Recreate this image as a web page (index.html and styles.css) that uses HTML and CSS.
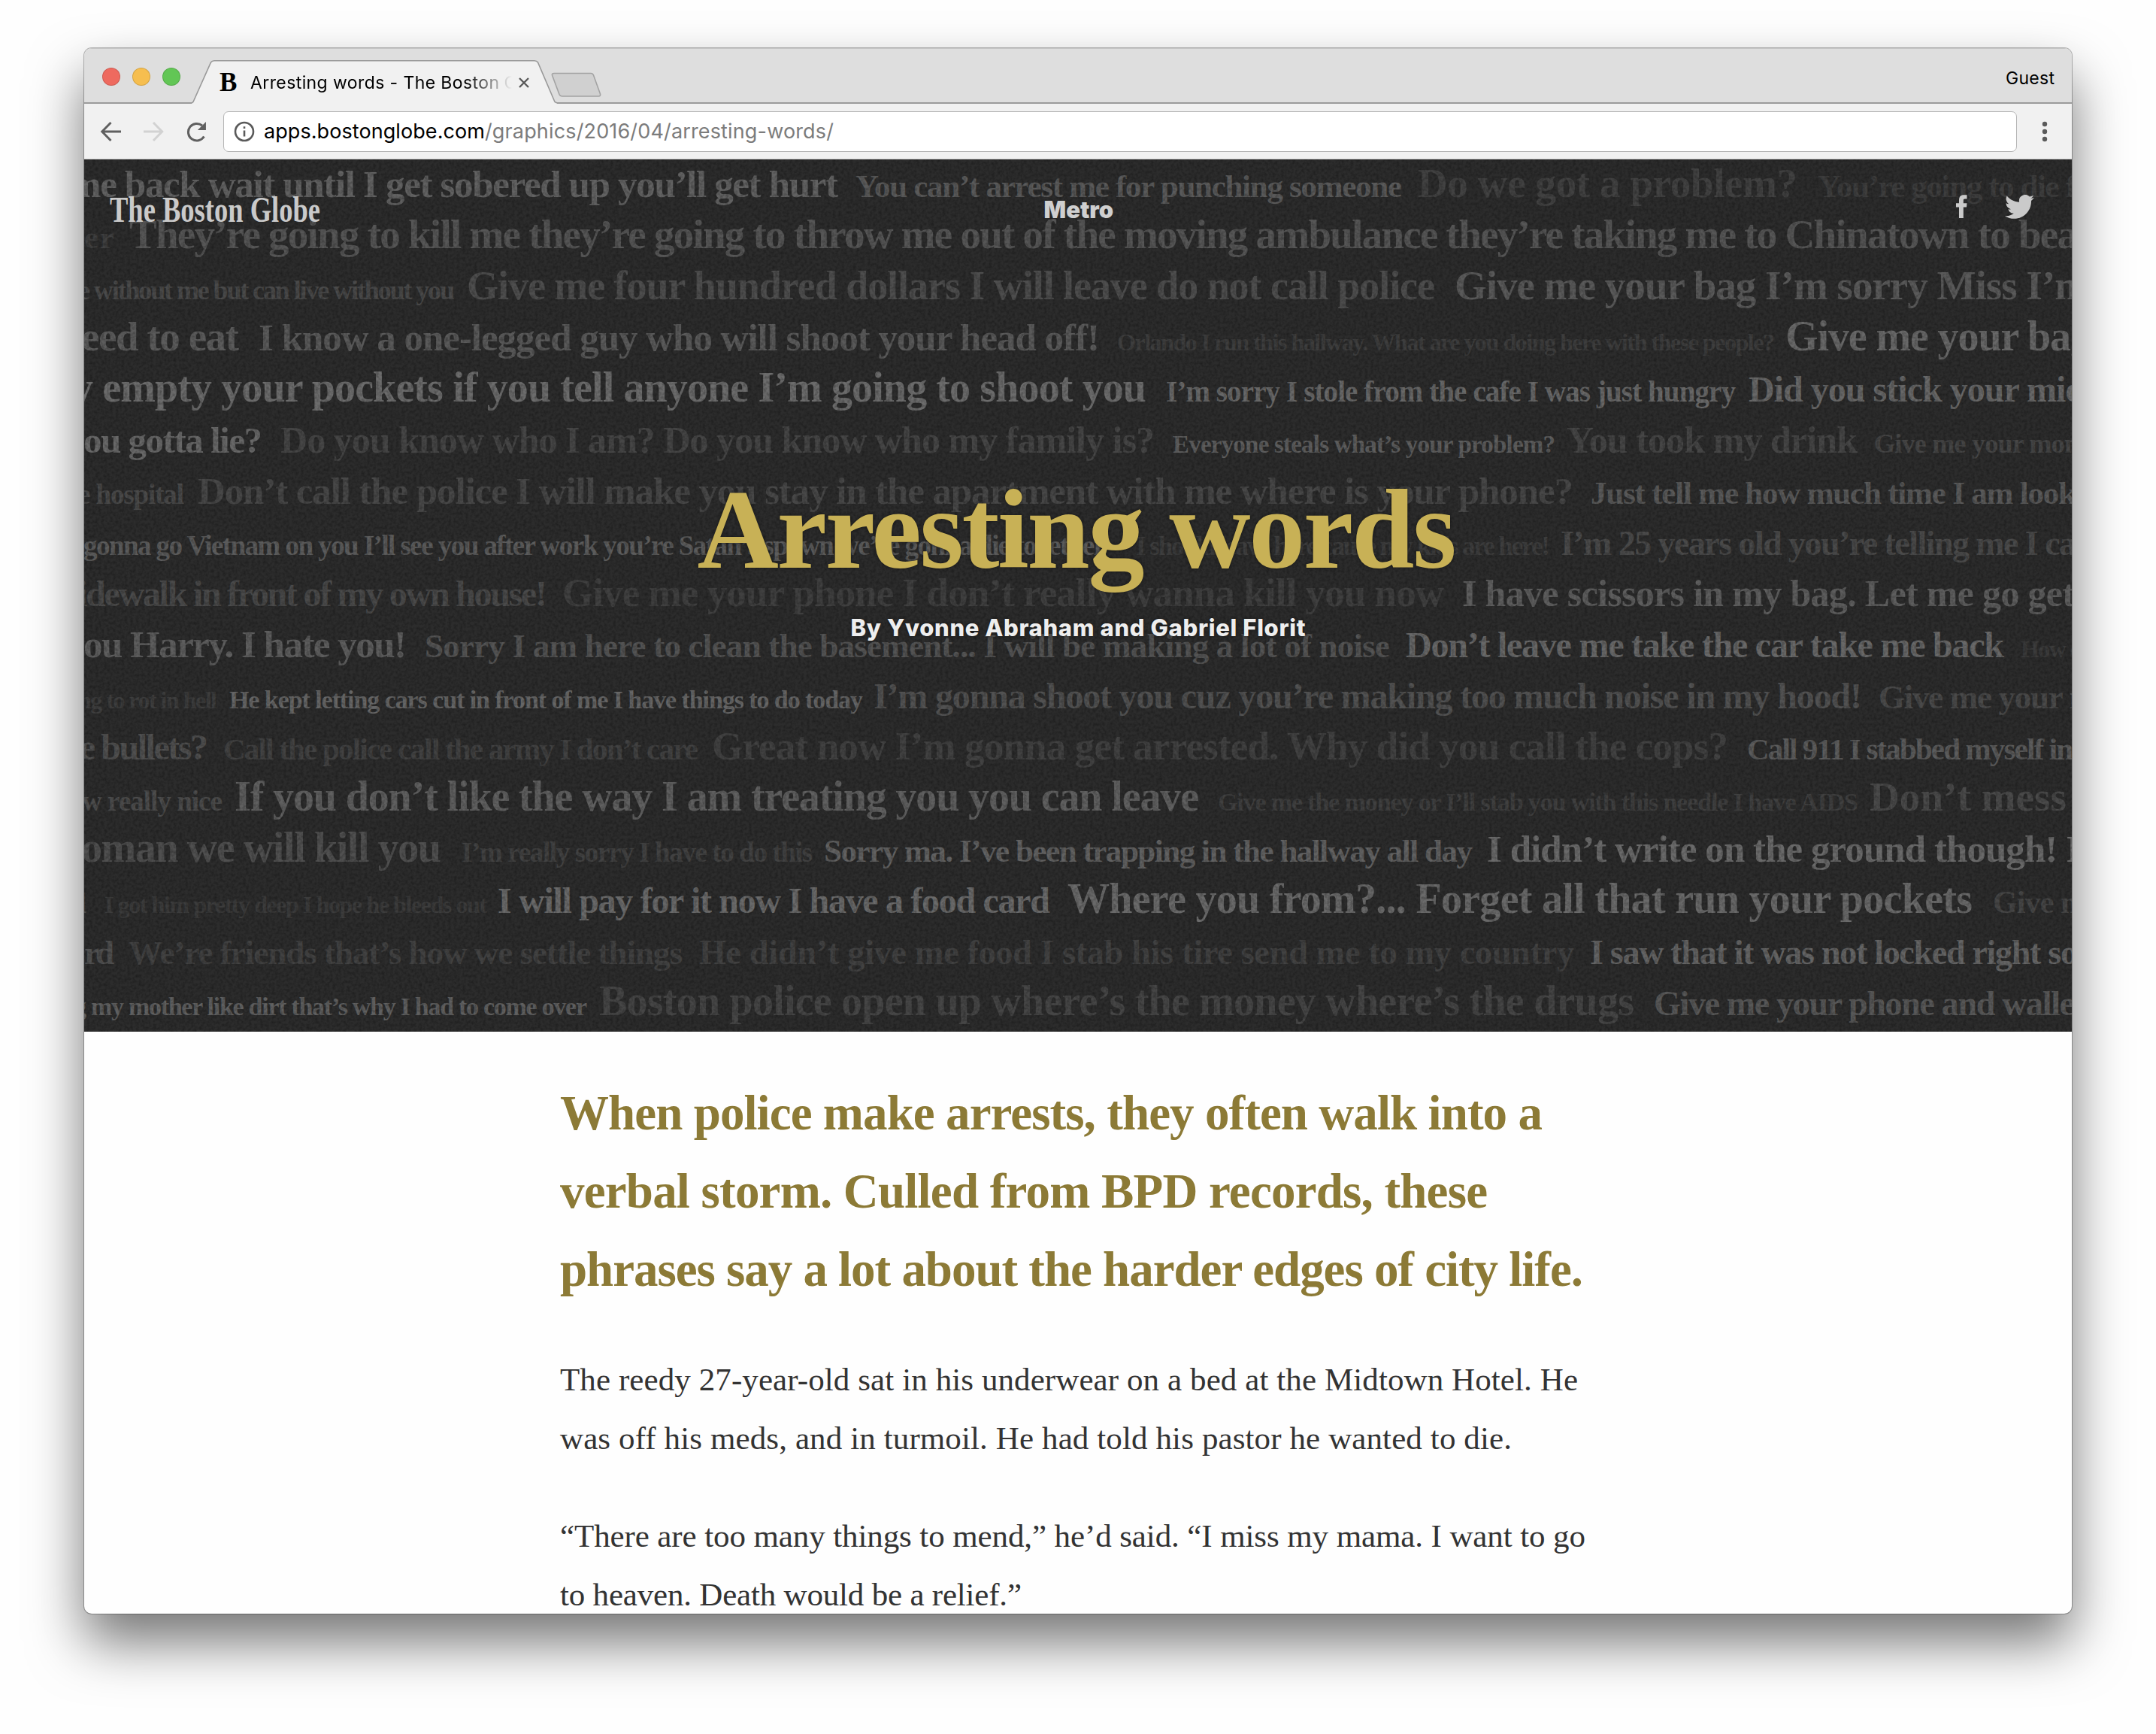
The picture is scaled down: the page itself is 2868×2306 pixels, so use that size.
FILE: index.html
```html
<!DOCTYPE html>
<html lang="en">
<head>
<meta charset="utf-8">
<title>Arresting words - The Boston Globe</title>
<link rel="stylesheet" href="styles.css">
</head>
<body>
<div class="window">
  <div class="tabstrip">
    <div class="lights"><i class="light red"></i><i class="light amber"></i><i class="light green"></i></div>
    <div class="tab">
      <svg class="tab-shape" width="486" height="58" viewBox="0 0 486 58"><path d="M0 57 L2 55.500 L25.500 3 Q27 .8 30 .8 H456 Q459 .8 460.500 3 L483 55.500 L486 57 V58 H0Z" fill="#f1f1f1"/><path d="M0 57 L2 55.500 L25.500 3 Q27 .8 30 .8 H456 Q459 .8 460.500 3 L483 55.500 L486 57" fill="none" stroke="#999" stroke-width="1.600"/></svg>
      <div class="tab-content">
        <span class="favicon">B</span>
        <span class="tab-title"><span data-fit="331">Arresting words - The Boston</span> Globe</span>
        <svg class="close" width="14" height="14" viewBox="0 0 14 14"><path d="M1 1 13 13M13 1 1 13" stroke="#5a5a5a" stroke-width="2.400"/></svg>
      </div>
    </div>
    <svg class="newtab" width="68" height="34" viewBox="0 0 68 34"><path d="M5 1.500 H54 Q56.500 1.500 57.500 4 L66.500 29 Q67 32 64.500 32 H16 Q13 32 12 29.500 L2.500 4 Q2 1.500 5 1.500Z" fill="#d0d0d0" stroke="#a3a3a3" stroke-width="1.600"/></svg>
    <span class="guest" data-fit="65">Guest</span>
  </div>
  <div class="toolbar">
    <svg class="nav-icons" width="160" height="32" viewBox="0 0 160 32" fill="none" stroke-width="3">
      <path d="M28 16H3M14.500 4 2.800 16 14.500 28" stroke="#606060"/>
      <path d="M58 16H83M71 4 82.700 16 71 28" stroke="#d2d2d2"/>
      <path d="M138.500 22.500A11.300 11.300 0 1 1 136 8" stroke="#606060"/>
      <path d="M141 3V14H130Z" fill="#606060"/>
    </svg>
    <div class="omnibox">
      <svg width="28" height="28" viewBox="0 0 28 28"><circle cx="14" cy="14" r="12" fill="none" stroke="#5a5a5a" stroke-width="2.600"/><path d="M14 12.500V20.500M14 7.300V10" stroke="#5a5a5a" stroke-width="2.600"/></svg>
      <span class="url"><b data-fit="294">apps.bostonglobe.com</b><span data-fit="464">/graphics/2016/04/arresting-words/</span></span>
    </div>
    <svg width="8" height="28" viewBox="0 0 8 28" fill="#5a5a5a"><circle cx="4" cy="4" r="3.200"/><circle cx="4" cy="14" r="3.200"/><circle cx="4" cy="24" r="3.200"/></svg>
  </div>
  <div class="hero">
    <div class="wall" id="wall"></div>
    <svg class="grain" width="2644" height="1160"><filter id="grain" x="0" y="0" width="100%" height="100%"><feTurbulence type="fractalNoise" baseFrequency=".26" numOctaves="2" seed="4"/><feColorMatrix values="0 0 0 0 0  0 0 0 0 0  0 0 0 0 0  .55 0 0 0 -.19"/></filter><rect width="2644" height="1160" filter="url(#grain)"/></svg>
    <div class="masthead">
      <div class="bar">
        <svg class="logo" width="284" height="44" viewBox="0 0 284 44"><text x="1" y="38.500" textLength="280" lengthAdjust="spacingAndGlyphs">The Boston Globe</text></svg>
        <span class="section" data-fit="91">Metro</span>
        <div class="social">
          <svg width="15" height="31" viewBox="0 0 15 31"><path d="M4 31V16.500H0V11.200H4V7.500C4 2.300 6 .3 10.500.3H14.500V5.500H12C10.200 5.500 9.800 6.200 9.800 7.800V11.200H14.500L14 16.500H9.800V31Z"/></svg>
          <svg width="39" height="32" viewBox="0 0 24 19.600"><path d="M23.950 2.300c-.88.390-1.830.650-2.820.770 1.010-.61 1.790-1.570 2.160-2.720-.95.560-2 .970-3.130 1.190A4.920 4.920 0 0 0 11.780 6.030C7.690 5.830 4.070 3.860 1.640.890A4.910 4.910 0 0 0 3.160 7.460 4.860 4.860 0 0 1 .930 6.840v.060a4.930 4.930 0 0 0 3.950 4.830 5 5 0 0 1-2.210.080 4.940 4.940 0 0 0 4.600 3.420A9.870 9.870 0 0 1 0 17.270 13.990 13.990 0 0 0 7.550 19.500c9.140 0 14.300-7.720 13.980-14.640A9.940 9.940 0 0 0 23.950 2.300Z"/></svg>
        </div>
      </div>
      <h1 data-fit="1010">Arresting words</h1>
      <p class="byline" data-fit="605">By Yvonne Abraham and Gabriel Florit</p>
    </div>
  </div>
  <div class="article">
    <h2>
      <span data-fit="1307">When police make arrests, they often walk into a</span><br>
      <span data-fit="1234">verbal storm. Culled from BPD records, these</span><br>
      <span data-fit="1361">phrases say a lot about the harder edges of city life.</span>
    </h2>
    <p>
      <span data-fit="1354">The reedy 27-year-old sat in his underwear on a bed at the Midtown Hotel. He</span><br>
      <span data-fit="1266">was off his meds, and in turmoil. He had told his pastor he wanted to die.</span>
    </p>
    <p>
      <span data-fit="1364">“There are too many things to mend,” he’d said. “I miss my mama. I want to go</span><br>
      <span data-fit="614">to heaven. Death would be a relief.”</span>
    </p>
  </div>
</div>
<script src="wall.js"></script>
</body>
</html>
```
FILE: styles.css
```css
* { box-sizing: border-box; }
body { margin: 0; padding: 64px 0 0 112px; height: 2306px; overflow: hidden; background: #fefefe; }
.window {
  width: 2644px; height: 2082px; overflow: hidden; display: flex; flex-direction: column;
  background: #fefefe; border-radius: 10px;
  box-shadow: 0 0 0 1px rgba(0,0,0,.28), 0 38px 72px rgba(0,0,0,.54);
}
[data-fit] { display: inline-block; white-space: nowrap; }

.tabstrip {
  flex: none; height: 74px; display: flex; align-items: flex-end;
  background: #dedede; box-shadow: inset 0 -2px #9b9b9b, inset 0 1px #c4c4c4;
  font: 23px/30px Inter, "Liberation Sans", sans-serif; color: #000;
}
.lights { display: flex; gap: 16px; margin: 0 0 24px 24px; width: 119px; }
.light { width: 24px; height: 24px; border-radius: 50%; border: 1px solid rgba(0,0,0,.14); }
.red { background: #ee6a5f; }
.amber { background: #f6be4f; }
.green { background: #62c655; }
.tab { display: grid; height: 58px; }
.tab > * { grid-area: 1 / 1; }
.tab-content { display: flex; align-items: center; padding: 1px 34px 0 37px; }
.favicon { width: 41px; font: bold 35px/30px "Liberation Serif", serif; }
.tab-title {
  width: 348px; overflow: hidden; white-space: nowrap; margin-right: 9px;
  -webkit-mask-image: linear-gradient(90deg, #000 82%, transparent 100%);
  mask-image: linear-gradient(90deg, #000 82%, transparent 100%);
}
.newtab { margin: 0 0 8px -9px; }
.guest { margin: 0 23px 19px auto; }

.toolbar {
  flex: none; height: 74px; display: flex; align-items: center;
  background: #f1f1f1; border-bottom: 1px solid #ccc; padding: 0 32px 0 21px;
}
.omnibox {
  width: 2387px; height: 54px; display: flex; align-items: center; gap: 12px; margin: 0 33px 0 4px;
  padding-left: 13px; background: #fff; border: 1px solid #b4b4b4; border-radius: 7px;
}
.url { font: 27px/34px Inter, "Liberation Sans", sans-serif; color: #7c7c7c; }
.url b { font-weight: 400; color: #000; }

.hero { flex: none; height: 1160px; display: grid; background: #2c2c2c; overflow: hidden; }
.hero > * { grid-area: 1 / 1; }
.row { display: block; height: 68px; white-space: nowrap; font: bold 47px/68px "Liberation Serif", serif; }
.phrase { display: inline-block; line-height: 0; white-space: nowrap; }
.wall { width: 2644px; overflow: hidden; height: 1160px; }

.masthead { display: flex; flex-direction: column; align-items: center; width: 2644px; }
.bar { width: 2644px; height: 120px; display: grid; grid-template-columns: 1fr 91px 1fr; padding: 44px 33px 0; fill: #cacaca; color: #cfcfcf; }
.logo { font: bold 49px "Liberation Serif", serif; }
.section { font: 900 31px/46px Inter, sans-serif; }
.social { display: flex; gap: 50px; justify-content: flex-end; padding: 3px 17px 0 0; }
.masthead h1 {
  margin: 284px 3px 0 0; font: bold 150px/176px "Liberation Serif", serif; color: #c8b156;
  text-shadow: 0 0 4px rgba(20,20,20,.8);
}
.byline {
  margin: 21px 0 0; font: 800 31px/44px Inter, sans-serif; color: #eee;
  text-shadow: 0 0 4px rgba(20,20,20,.8);
}

.article { padding: 56px 0 0 633px; }
.article h2 { margin: 0; font: bold 65px/104px "Liberation Serif", serif; color: #8c7a36; }
.article p { margin: 56px 0 0; font: 43px/78px "Liberation Serif", serif; color: #333; }
.article p + p { margin-top: 52px; }
```
FILE: wall.js
```js
// Each phrase: text, left edge, right edge, type size, grey level.
var LEFT = 112;
var rows = [
  [["me back wait until I get sobered up you’ll get hurt",92,1115,51,"62"],["You can’t arrest me for punching someone",1138,1865,43,"5a"],["Do we got a problem?",1886,2391,55,"42"],["You’re going to die f",2418,2762,43,"3e"]],
  [["er",112,152,43,"40"],["They’re going to kill me they’re going to throw me out of the moving ambulance they’re taking me to Chinatown to bea",172,2764,55,"56"]],
  [["e without me but can live without you",104,605,36,"4a"],["Give me four hundred dollars I will leave do not call police",621,1909,54,"4e"],["Give me your bag I’m sorry Miss I’m",1935,2779,55,"5a"]],
  [["eed to eat",108,318,55,"5c"],["I know a one-legged guy who will shoot your head off!",344,1463,51,"5a"],["Orlando I run this hallway. What are you doing here with these people?",1486,2361,32,"3e"],["Give me your bag",2375,2782,56,"68"]],
  [["y empty your pockets if you tell anyone I’m going to shoot you",96,1525,56,"6c"],["I’m sorry I stole from the cafe I was just hungry",1551,2309,39,"68"],["Did you stick your mid",2326,2774,48,"68"]],
  [["ou gotta lie?",111,349,49,"68"],["Do you know who I am? Do you know who my family is?",373,1536,50,"46"],["Everyone steals what’s your problem?",1560,2069,33,"5e"],["You took my drink",2084,2471,50,"46"],["Give me your mon",2493,2766,36,"46"]],
  [["e hospital",104,245,37,"4a"],["Don’t call the police I will make you stay in the apartment with me where is your phone?",263,2093,51,"48"],["Just tell me how much time I am look",2116,2762,43,"5a"]],
  [["gonna go Vietnam on you I’ll see you after work you’re Satan’s spawn we’re gonna die together",111,1471,37,"5c"],["I should leave here cause my kids are here!",1511,2062,35,"3e"],["I’m 25 years old you’re telling me I ca",2076,2762,46,"4a"]],
  [["idewalk in front of my own house!",103,728,48,"4a"],["Give me your phone I don’t really wanna kill you now",748,1921,53,"40"],["I have scissors in my bag. Let me go get",1945,2760,50,"5e"]],
  [["ou Harry. I hate you!",111,541,51,"5e"],["Sorry I am here to clean the basement... I will be making a lot of noise",565,1849,45,"54"],["Don’t leave me take the car take me back",1870,2666,48,"68"],["How c",2688,2768,32,"3c"]],
  [["ng to rot in hell",104,289,32,"3e"],["He kept letting cars cut in front of me I have things to do today",305,1148,34,"66"],["I’m gonna shoot you cuz you’re making too much noise in my hood!",1162,2477,48,"52"],["Give me your m",2499,2790,45,"4a"]],
  [["e bullets?",106,277,48,"50"],["Call the police call the army I don’t care",297,929,41,"42"],["Great now I’m gonna get arrested. Why did you call the cops?",947,2299,53,"42"],["Call 911 I stabbed myself in",2324,2758,41,"5c"]],
  [["w really nice",109,296,37,"4c"],["If you don’t like the way I am treating you you can leave",312,1595,56,"60"],["Give me the money or I’ll stab you with this needle I have AIDS",1620,2472,34,"40"],["Don’t mess",2487,2749,55,"4a"]],
  [["oman we will kill you",108,587,56,"50"],["I’m really sorry I have to do this",614,1081,37,"42"],["Sorry ma. I’ve been trapping in the hallway all day",1096,1959,43,"62"],["I didn’t write on the ground though! I",1978,2768,51,"6a"]],
  [["d",94,115,37,"4c"],["I got him pretty deep I hope he bleeds out",139,648,32,"3c"],["I will pay for it now I have a food card",662,1397,48,"6a"],["Where you from?... Forget all that run your pockets",1420,2624,56,"6a"],["Give m",2651,2776,42,"46"]],
  [["rd",112,152,45,"50"],["We’re friends that’s how we settle things",171,908,45,"42"],["He didn’t give me food I stab his tire send me to my country",930,2094,46,"42"],["I saw that it was not locked right so",2115,2764,46,"64"]],
  [["g my mother like dirt that’s why I had to come over",98,781,34,"60"],["Boston police open up where’s the money where’s the drugs",797,2174,56,"46"],["Give me your phone and wallet",2200,2774,46,"58"]]
];

// Tracks a line of type in or out until it fills the given measure.
function fit(el, width) {
  var natural = el.getBoundingClientRect().width;
  el.style.letterSpacing = (width - natural) / (el.textContent.length - 1 || 1) + "px";
  el.style.width = width + "px";
}

var wall = document.getElementById("wall");
rows.forEach(function (phrases) {
  var row = document.createElement("div");
  row.className = "row";
  wall.appendChild(row);
  var x = LEFT;
  phrases.forEach(function (p) {
    var el = document.createElement("span");
    el.className = "phrase";
    el.textContent = p[0];
    el.style.marginLeft = p[1] - x + "px";
    el.style.fontSize = p[3] + "px";
    el.style.color = "#" + p[4] + p[4] + p[4];
    row.appendChild(el);
    fit(el, p[2] - p[1]);
    x = p[2];
  });
});

document.querySelectorAll("[data-fit]").forEach(function (el) {
  fit(el, Number(el.dataset.fit));
});
```
